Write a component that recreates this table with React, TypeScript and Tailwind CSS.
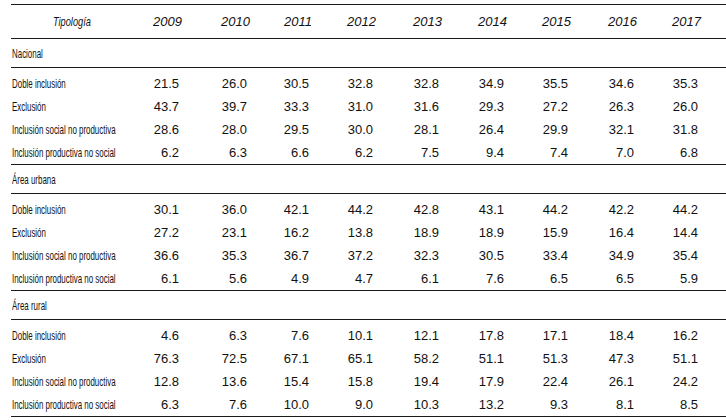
const years = ["2009", "2010", "2011", "2012", "2013", "2014", "2015", "2016", "2017"]

const sections = [
  {
    name: "Nacional",
    rows: [
      ["Doble inclusión", "21.5", "26.0", "30.5", "32.8", "32.8", "34.9", "35.5", "34.6", "35.3"],
      ["Exclusión", "43.7", "39.7", "33.3", "31.0", "31.6", "29.3", "27.2", "26.3", "26.0"],
      ["Inclusión social no productiva", "28.6", "28.0", "29.5", "30.0", "28.1", "26.4", "29.9", "32.1", "31.8"],
      ["Inclusión productiva no social", "6.2", "6.3", "6.6", "6.2", "7.5", "9.4", "7.4", "7.0", "6.8"],
    ],
  },
  {
    name: "Área urbana",
    rows: [
      ["Doble inclusión", "30.1", "36.0", "42.1", "44.2", "42.8", "43.1", "44.2", "42.2", "44.2"],
      ["Exclusión", "27.2", "23.1", "16.2", "13.8", "18.9", "18.9", "15.9", "16.4", "14.4"],
      ["Inclusión social no productiva", "36.6", "35.3", "36.7", "37.2", "32.3", "30.5", "33.4", "34.9", "35.4"],
      ["Inclusión productiva no social", "6.1", "5.6", "4.9", "4.7", "6.1", "7.6", "6.5", "6.5", "5.9"],
    ],
  },
  {
    name: "Área rural",
    rows: [
      ["Doble inclusión", "4.6", "6.3", "7.6", "10.1", "12.1", "17.8", "17.1", "18.4", "16.2"],
      ["Exclusión", "76.3", "72.5", "67.1", "65.1", "58.2", "51.1", "51.3", "47.3", "51.1"],
      ["Inclusión social no productiva", "12.8", "13.6", "15.4", "15.8", "19.4", "17.9", "22.4", "26.1", "24.2"],
      ["Inclusión productiva no social", "6.3", "7.6", "10.0", "9.0", "10.3", "13.2", "9.3", "8.1", "8.5"],
    ],
  },
]

const grid = "grid grid-cols-[103px_65px_68px_62px_64px_66px_65px_64px_66px_64px_1fr]"

// condensed look: the face in the picture is a narrow grotesque
function Narrow({ children, k = "scale-x-[0.61]" }: { children: React.ReactNode; k?: string }) {
  return <span className={`inline-block origin-left whitespace-nowrap ${k}`}>{children}</span>
}

export default function App() {
  return (
    <div className="w-[726px] h-[420px] bg-white pt-[4px] pl-[11px] text-[13px] leading-none text-[#111] font-['Liberation_Sans',Arial,sans-serif]">
      <div className="border-t border-[#1a1a1a]" />
      <div className={`${grid} h-[33px] items-center italic`}>
        <div className="pl-[42px]">
          <Narrow k="scale-x-[0.71]">Tipología</Narrow>
        </div>
        {years.map((y) => (
          <div key={y} className="text-right -mr-[3px]">{y}</div>
        ))}
      </div>
      {sections.map((s) => (
        <div key={s.name}>
          <div className="border-t border-[#1a1a1a]" />
          <div className="h-[28px] flex items-center pl-[1px] pt-[1px]">
            <Narrow>{s.name}</Narrow>
          </div>
          <div className="border-t border-[#1a1a1a]" />
          <div className="pt-[4px]">
            {s.rows.map((r) => (
              <div key={r[0]} className={`${grid} h-[23px] items-center`}>
                <div className="pl-[1px]">
                  <Narrow>{r[0]}</Narrow>
                </div>
                {r.slice(1).map((v, i) => (
                  <div key={i} className="text-right">{v}</div>
                ))}
              </div>
            ))}
          </div>
        </div>
      ))}
      <div className="border-t border-[#1a1a1a]" />
    </div>
  )
}
